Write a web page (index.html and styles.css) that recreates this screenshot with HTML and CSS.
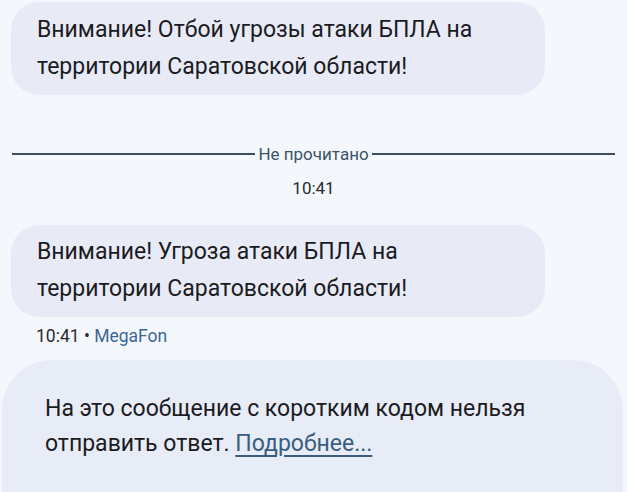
FILE: index.html
```html
<!DOCTYPE html>
<html lang="ru">
<head>
<meta charset="utf-8">
<link rel="stylesheet" href="styles.css">
</head>
<body>
<div class="screen">
  <div class="bubble first">
    <p>Внимание! Отбой угрозы атаки БПЛА на<br>территории Саратовской области!</p>
  </div>
  <div class="divider">
    <span class="line"></span>
    <span class="label">Не прочитано</span>
    <span class="line"></span>
  </div>
  <div class="time">10:41</div>
  <div class="bubble second">
    <p>Внимание! Угроза атаки БПЛА на<br>территории Саратовской области!</p>
  </div>
  <div class="meta">10:41 • <span class="sender">MegaFon</span></div>
  <div class="notice">
    <p>На это сообщение с коротким кодом нельзя<br>отправить ответ. <a href="#" class="more">Подробнее...</a></p>
  </div>
</div>
</body>
</html>
```

FILE: styles.css
```css
* { box-sizing: border-box; }
html, body {
  margin: 0;
  padding: 0;
  background: #f4f8fc;
}
.screen {
  width: 627px;
  height: 492px;
  overflow: hidden;
  font-family: Roboto, "Noto Sans", sans-serif;
  display: flex;
  flex-direction: column;
}
.bubble {
  margin-left: 11px;
  width: 534px;
  background: #e8ebf6;
  border-radius: 28px;
  padding: 9px 26px 0;
}
.bubble p, .notice p {
  margin: 0;
  font-size: 23px;
  line-height: 37px;
  color: #1b1b1f;
}
.first { margin-top: 2px; height: 93px; }
.divider {
  margin-top: 49px;
  display: flex;
  align-items: center;
  padding: 0 12px 0 12px;
}
.line {
  flex: 1;
  height: 2px;
  background: #3e4f5c;
}
.label {
  font-size: 17px;
  color: #3b5466;
  padding: 0 3px;
  line-height: 20px;
}
.time {
  margin-top: 14px;
  text-align: center;
  font-size: 17px;
  color: #2a2a2e;
  line-height: 20px;
}
.second { margin-top: 27px; height: 92px; padding-top: 8px; }
.meta {
  margin-top: 9px;
  margin-left: 36px;
  font-size: 17.5px;
  line-height: 20px;
  color: #2a2a2e;
}
.sender { color: #3d6597; }
.notice {
  margin-top: 14px;
  margin-left: 2px;
  width: 621px;
  flex: 1;
  background: #e8ecf6;
  border-radius: 50px 50px 0 0;
  padding: 31px 43px 0;
}
.notice p { line-height: 35px; }
.more {
  color: #385d80;
  text-decoration: underline;
  text-underline-offset: 4px;
  text-decoration-thickness: 2px;
}
```
